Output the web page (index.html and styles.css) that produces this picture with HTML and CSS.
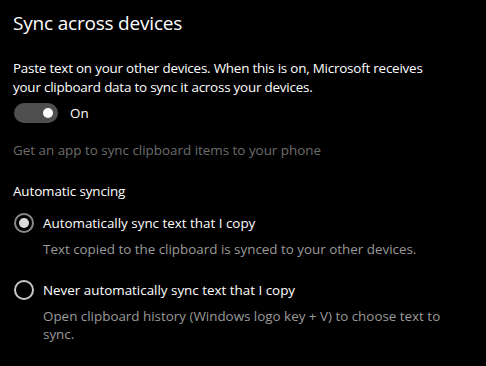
FILE: index.html
```html
<!DOCTYPE html>
<html lang="en">
<head>
    <meta charset="UTF-8">
    <title>Sync across devices</title>
    <link rel="stylesheet" href="styles.css">
</head>
<body>
    <div class="page">
        <h2 class="title">Sync across devices</h2>
        <p class="intro">Paste text on your other devices. When this is on, Microsoft receives your clipboard data to sync it across your devices.</p>
        <div class="toggle-row">
            <span class="toggle"><span class="knob"></span></span>
            <span class="toggle-label">On</span>
        </div>
        <p class="link-disabled">Get an app to sync clipboard items to your phone</p>
        <p class="group-label">Automatic syncing</p>
        <div class="option first">
            <span class="radio checked"></span>
            <span class="option-label">Automatically sync text that I copy</span>
        </div>
        <p class="option-desc">Text copied to the clipboard is synced to your other devices.</p>
        <div class="option">
            <span class="radio"></span>
            <span class="option-label">Never automatically sync text that I copy</span>
        </div>
        <p class="option-desc">Open clipboard history (Windows logo key + V) to choose text to sync.</p>
    </div>
</body>
</html>
```

FILE: styles.css
```css
body {
    margin: 0;
    background: #000;
    color: #fff;
    font-family: 'Open Sans', 'Noto Sans', sans-serif;
}
.page {
    padding: 9px 13px 0 13px;
    width: 440px;
}
.title {
    margin: 0;
    font-size: 19px;
    font-weight: 400;
    line-height: 28px;
    letter-spacing: -0.2px;
}
.intro {
    margin: 22px 0 0 0;
    font-size: 13.4px;
    line-height: 19px;
    letter-spacing: -0.2px;
}
.toggle-row {
    display: flex;
    align-items: center;
    margin-top: 6px;
    height: 20px;
}
.toggle {
    width: 44px;
    height: 20px;
    border-radius: 10px;
    background: #4f4f4f;
    display: flex;
    align-items: center;
    justify-content: flex-end;
    padding-right: 5px;
    box-sizing: border-box;
    margin-left: 1px;
}
.knob {
    width: 10px;
    height: 10px;
    border-radius: 50%;
    background: #fff;
}
.toggle-label {
    margin-left: 12px;
    font-size: 13.4px;
}
.link-disabled {
    margin: 18px 0 0 0;
    font-size: 13.4px;
    line-height: 19px;
    color: #6d6d6d;
    letter-spacing: 0;
}
.group-label {
    margin: 22px 0 0 0;
    font-size: 13.4px;
    line-height: 19px;
    letter-spacing: -0.1px;
}
.option {
    display: flex;
    align-items: center;
    margin-top: 21px;
    height: 20px;
}
.option.first {
    margin-top: 12px;
}
.radio {
    width: 20px;
    height: 20px;
    border-radius: 50%;
    border: 2px solid #c8c8c8;
    box-sizing: border-box;
    margin-left: 1px;
    display: flex;
    align-items: center;
    justify-content: center;
}
.radio.checked {
    border-color: #8a8a8a;
}
.radio.checked::after {
    content: '';
    width: 10px;
    height: 10px;
    border-radius: 50%;
    background: #dcdcdc;
}
.option-label {
    margin-left: 9px;
    font-size: 13.4px;
    letter-spacing: 0;
}
.option-desc {
    margin: 7px 0 0 30px;
    font-size: 13.4px;
    line-height: 18.5px;
    color: #9a9a9a;
    letter-spacing: 0;
    padding-right: 10px;
}
```
